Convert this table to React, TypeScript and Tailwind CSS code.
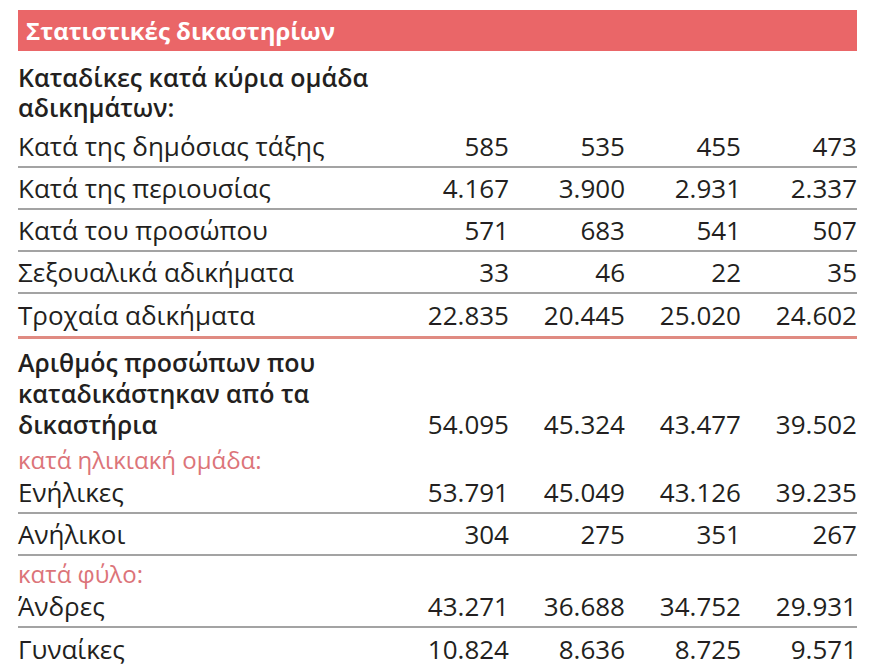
import React from 'react';

type Row = { label: string; values: string[]; last?: boolean };

const offenceRows: Row[] = [
  { label: 'Κατά της δημόσιας τάξης', values: ['585', '535', '455', '473'] },
  { label: 'Κατά της περιουσίας', values: ['4.167', '3.900', '2.931', '2.337'] },
  { label: 'Κατά του προσώπου', values: ['571', '683', '541', '507'] },
  { label: 'Σεξουαλικά αδικήματα', values: ['33', '46', '22', '35'] },
  { label: 'Τροχαία αδικήματα', values: ['22.835', '20.445', '25.020', '24.602'], last: true },
];

const ageRows: Row[] = [
  { label: 'Ενήλικες', values: ['53.791', '45.049', '43.126', '39.235'] },
  { label: 'Ανήλικοι', values: ['304', '275', '351', '267'] },
];

const sexRows: Row[] = [
  { label: 'Άνδρες', values: ['43.271', '36.688', '34.752', '29.931'] },
  { label: 'Γυναίκες', values: ['10.824', '8.636', '8.725', '9.571'], last: true },
];

const grid = 'grid grid-cols-[1fr_116px_116px_116px_116px]';

const DataRow = ({ row }: { row: Row }) => (
  <div className={`${grid} h-[42px] items-center ${row.last ? '' : 'border-b-2 border-[#a3a3a3]'}`}>
    <span>{row.label}</span>
    {row.values.map((v, i) => (
      <span key={i} className="text-right">{v}</span>
    ))}
  </div>
);

const App = () => {
  return (
    <div className="w-[875px] h-[670px] bg-white overflow-hidden px-[18px] pt-[10px] text-[#231f20] text-[26px] leading-[32px] font-['Open_Sans','Noto_Sans',sans-serif]">
      <div className="h-[41px] bg-[#ea6668] flex items-center px-[8px]">
        <span className="text-white font-bold text-[24px] leading-none">Στατιστικές δικαστηρίων</span>
      </div>

      <div className="font-semibold text-[25px] leading-[30px] pt-[11px] pb-[4px]">
        Καταδίκες κατά κύρια ομάδα
        <br />
        αδικημάτων:
      </div>

      {offenceRows.map((r) => (
        <DataRow key={r.label} row={r} />
      ))}
      <div className="h-[3px] bg-[#e08b82]" />

      <div className={`${grid} items-end pt-[8px]`}>
        <div className="font-semibold text-[25px] leading-[31px]">
          Αριθμός προσώπων που
          <br />
          καταδικάστηκαν από τα
          <br />
          δικαστήρια
        </div>
        {['54.095', '45.324', '43.477', '39.502'].map((v) => (
          <span key={v} className="text-right leading-[31px]">{v}</span>
        ))}
      </div>

      <div className="text-[#dc7479] text-[24px] leading-[24px] pt-[8px]">κατά ηλικιακή ομάδα:</div>
      {ageRows.map((r) => (
        <DataRow key={r.label} row={r} />
      ))}

      <div className="text-[#dc7479] text-[24px] leading-[24px] pt-[6px]">κατά φύλο:</div>
      {sexRows.map((r) => (
        <DataRow key={r.label} row={r} />
      ))}
    </div>
  );
};

export default App;
